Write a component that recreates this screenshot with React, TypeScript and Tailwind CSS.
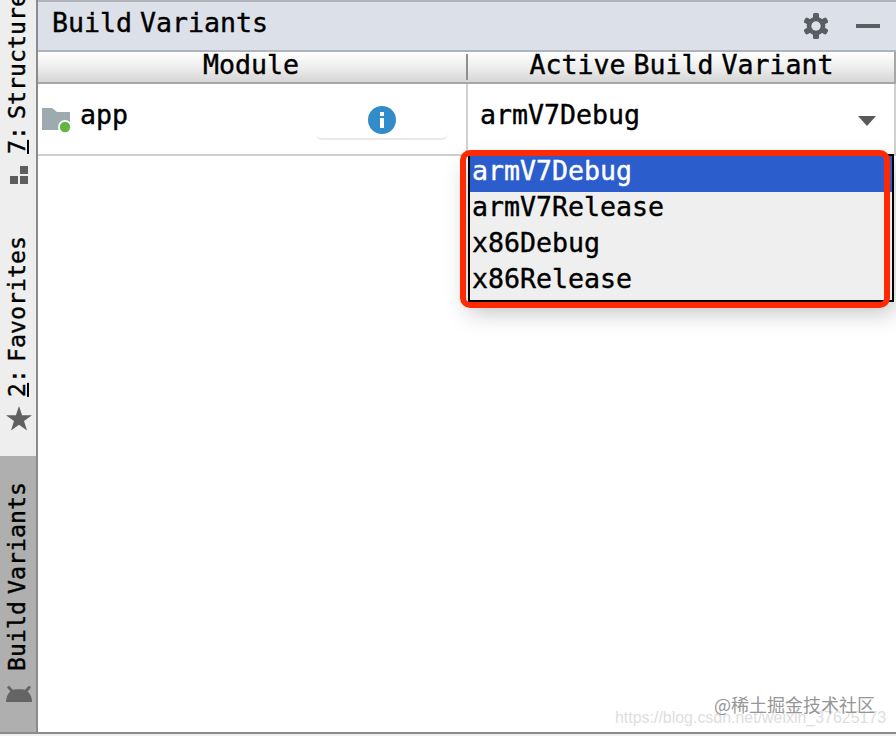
import React from 'react';

const variants = ['armV7Debug', 'armV7Release', 'x86Debug', 'x86Release'];

const StructureIcon: React.FC = () => (
  <svg width="18" height="18" viewBox="0 0 18 18" fill="#5d5d5d">
    <rect x="10" y="0" width="8" height="8" />
    <rect x="0" y="10" width="8" height="8" />
    <rect x="10" y="10" width="8" height="8" />
  </svg>
);

const StarIcon: React.FC = () => (
  <svg width="26" height="25" viewBox="0 0 26 25" fill="#606060">
    <path d="M13 0 L16.1 9.2 H26 L18 15 L21 24.5 L13 18.8 L5 24.5 L8 15 L0 9.2 H9.9 Z" />
  </svg>
);

const AndroidIcon: React.FC = () => (
  <svg width="26" height="16" viewBox="0 0 26 16">
    <path d="M0 16 C0 8 5 3.200 10 3.200 H16 C21 3.200 26 8 26 16 Z" fill="#646464" />
    <path d="M2.800 1.500 L7 6 M23.200 1.500 L19 6" stroke="#646464" strokeWidth="3" strokeLinecap="round" />
  </svg>
);

const GearIcon: React.FC = () => (
  <svg width="24" height="26" viewBox="-12 -13 24 26">
    <g fill="#5a5d63">
      <rect x="-3" y="-13" width="6" height="26" rx="1.500" />
      <rect x="-3" y="-13" width="6" height="26" rx="1.500" transform="rotate(60)" />
      <rect x="-3" y="-13" width="6" height="26" rx="1.500" transform="rotate(120)" />
      <circle r="9.300" />
    </g>
    <circle r="4.700" fill="#dce0e8" />
  </svg>
);

const FolderIcon: React.FC = () => (
  <svg width="29" height="25" viewBox="0 0 29 25">
    <path d="M0 0 H10 L15 4 H28 V22 H0 Z" fill="#9daaae" />
    <circle cx="23" cy="19" r="7" fill="#fff" />
    <circle cx="23" cy="19" r="5.200" fill="#62b543" />
  </svg>
);

const InfoIcon: React.FC = () => (
  <svg width="28" height="28" viewBox="0 0 28 28">
    <circle cx="14" cy="14" r="14" fill="#328cca" />
    <rect x="12" y="6" width="4" height="4" fill="#fff" />
    <rect x="12" y="12" width="4" height="10" fill="#fff" />
  </svg>
);

const SideLabel: React.FC<{ children: React.ReactNode }> = ({ children }) => (
  <span className="mr-[3px] block w-9 rotate-180 whitespace-nowrap text-[23.200px] leading-9 tracking-[0.030px] [word-spacing:-7px] [writing-mode:vertical-rl]">
    {children}
  </span>
);

// Shortcut digit with its mnemonic underline
const Mnemonic: React.FC<{ children: React.ReactNode }> = ({ children }) => (
  <span className="inline-block h-[14px] border-l-2 border-black leading-[21px]">{children}</span>
);

export default function App() {
  return (
    <div className="relative flex h-[736px] w-[896px] flex-col overflow-hidden bg-[#f0f0f0] font-['DejaVu_Sans_Mono',monospace] text-black [-webkit-text-stroke:0.400px]">
      <div className="flex h-[732px]">
        {/* Tool window stripe */}
        <aside className="flex w-[38px] shrink-0 flex-col border-r-2 border-[#8b8b8b] bg-[#eeeeee]">
          <div className="flex h-[184px] flex-col items-center justify-end">
            <SideLabel><Mnemonic>7</Mnemonic>: Structure</SideLabel>
            <div className="mt-3 pl-0.5">
              <StructureIcon />
            </div>
          </div>
          <div className="flex h-[272px] flex-col items-center justify-end pb-[25px]">
            <SideLabel><Mnemonic>2</Mnemonic>: Favorites</SideLabel>
            <div className="mt-[9px] pl-0.5">
              <StarIcon />
            </div>
          </div>
          <div className="flex flex-1 flex-col items-center justify-end bg-[#afafaf] pb-[30px]">
            <SideLabel>Build Variants</SideLabel>
            <div className="mt-[15px] pl-0.5">
              <AndroidIcon />
            </div>
          </div>
        </aside>

        <main className="flex flex-1 flex-col bg-white">
          {/* Title bar */}
          <header className="flex h-[52px] items-start border-y-2 border-[#b0b4ba] bg-[#dce0e8] pl-3.5">
            <h1 className="text-[26.580px] leading-[42px] [word-spacing:-8px]">Build Variants</h1>
            <div className="ml-auto flex h-12 items-center gap-7 pr-4">
              <GearIcon />
              <div className="h-1 w-6 bg-[#5a5d63]" />
            </div>
          </header>

          {/* Column headings */}
          <div className="flex h-8 border-b-2 border-[#a6a6a6] bg-linear-to-b from-white via-[#eeeeee] to-[#d6d6d6] text-[26.580px] leading-[26px] [word-spacing:-8px]">
            <div className="w-[428px] pr-0.5 text-center">Module</div>
            <div className="mt-0.5 h-[26px] w-0.5 bg-[#8f8f8f]" />
            <div className="flex-1 border-r-2 border-[#a6a6a6] pl-px text-center">Active Build Variant</div>
          </div>

          <div className="flex h-[72px] border-b-2 border-[#d0d0d0] text-[26.580px]">
            <div className="flex w-[430px] border-r-2 border-[#d0d0d0] pl-1">
              <div className="pt-6">
                <FolderIcon />
              </div>
              <span className="ml-[9px] leading-[62px]">app</span>
              <div className="mt-4 ml-auto mr-[18px] flex h-10 w-[132px] justify-center rounded-md border-b-2 border-[#e9e9e9] pt-1.5">
                <InfoIcon />
              </div>
            </div>
            <div className="flex flex-1 items-start justify-between border-r-2 border-[#d0d0d0] pl-3 pr-[18px]">
              <span className="leading-[62px]">armV7Debug</span>
              <svg className="mt-8" width="18" height="10" viewBox="0 0 18 10" fill="#595959">
                <path d="M0 0 H18 L9 10 Z" />
              </svg>
            </div>
          </div>
        </main>
      </div>
      <div className="h-0.5 bg-[#8b8b8b]" />

      {/* Variant popup and its highlight frame */}
      <div className="absolute top-[154px] left-[468px] h-[148px] w-[426px] border-2 border-black bg-[#efefef] text-[26.580px] shadow-[0_10px_22px_rgba(0,0,0,0.250)]">
        {variants.map((variant, index) => (
          <div
            key={variant}
            className={index === 0 ? 'h-9 bg-[#2b5dcd] pl-0.5 leading-[30px] text-white' : 'h-9 pl-0.5 leading-[30px]'}
          >
            {variant}
          </div>
        ))}
      </div>
      <div className="absolute top-[150px] left-[460px] h-[158px] w-[430px] rounded-[10px] border-[6px] border-[#ff2a04]" />

      {/* Watermarks */}
      <div className="absolute top-[708px] left-[615px] font-['Liberation_Sans',sans-serif] text-[15.950px] leading-5 whitespace-nowrap text-[#dedede] [-webkit-text-stroke:0]">
        https://blog.csdn.net/weixin_37625173
      </div>
      <div className="absolute top-[692px] left-[714px] font-['Noto_Sans_CJK_SC',sans-serif] text-[18px] leading-6 whitespace-nowrap text-[#969696] [-webkit-text-stroke:0]">
        @稀土掘金技术社区
      </div>
    </div>
  );
}
